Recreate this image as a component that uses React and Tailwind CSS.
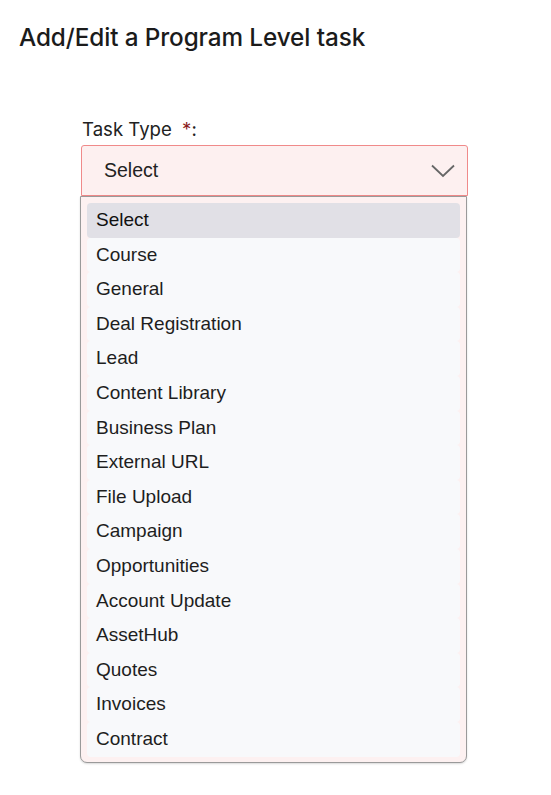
import React, { useState } from 'react';

const taskTypes = [
    'Select',
    'Course',
    'General',
    'Deal Registration',
    'Lead',
    'Content Library',
    'Business Plan',
    'External URL',
    'File Upload',
    'Campaign',
    'Opportunities',
    'Account Update',
    'AssetHub',
    'Quotes',
    'Invoices',
    'Contract',
];

export default function App() {
    const [selected, setSelected] = useState('Select');

    return (
        <div className="min-h-screen bg-white text-[#1b1b1b]" style={{ fontFamily: 'Inter, "Noto Sans", sans-serif' }}>
            <h1 className="pl-[19px] pt-[22px] text-[24.3px] leading-[30px] font-medium tracking-[-0.1px]">
                Add/Edit a Program Level task
            </h1>

            <div className="ml-[81px] mt-[65px] w-[387px]">
                <label className="block pl-px text-[18.6px] leading-[24px] text-[#222]">
                    Task Type <span className="ml-[5px] text-[#8b1c1c]">*</span>:
                </label>

                <div className="mt-[4px] h-[51px] flex items-center justify-between border border-[#f08a8a] rounded-t-[3px] bg-[#fdf0f0] pl-[22px] pr-[11px]">
                    <span className="text-[19.5px] text-[#222]" style={{ fontFamily: '"Liberation Sans", Arial, sans-serif' }}>
                        {selected}
                    </span>
                    <svg width="26" height="16" viewBox="0 0 26 16" fill="none">
                        <path d="M2 2.5 L13 13 L24 2.5" stroke="#666" strokeWidth="1.8" />
                    </svg>
                </div>

                <ul
                    className="-ml-px w-[387px] border border-[#9a9a9a] rounded-b-[7px] bg-[#fdf1f1] px-[6px] pt-[6px] pb-[5px] shadow-[0_1px_2px_rgba(0,0,0,0.15)]"
                    style={{ fontFamily: '"Liberation Sans", Arial, sans-serif' }}
                >
                    {taskTypes.map((t) => (
                        <li
                            key={t}
                            onClick={() => setSelected(t)}
                            className={
                                t === selected
                                    ? 'h-[34.6px] flex items-center rounded-[4px] bg-[#e1e0e6] pl-[9px] text-[19px] text-[#111]'
                                    : 'h-[34.6px] flex items-center rounded-[4px] bg-[#f8f9fb] pl-[9px] text-[19px] text-[#1e1e1e]'
                            }
                        >
                            {t}
                        </li>
                    ))}
                </ul>
            </div>
        </div>
    );
}
